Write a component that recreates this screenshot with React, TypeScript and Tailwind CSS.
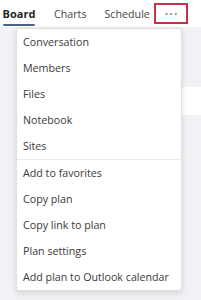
import { MoreHorizontal } from "lucide-react";

const GROUP_A = ["Conversation", "Members", "Files", "Notebook", "Sites"];
const GROUP_B = ["Add to favorites", "Copy plan", "Copy link to plan", "Plan settings", "Add plan to Outlook calendar"];

export default function App() {
  return (
    <div className="relative w-[201px] h-[300px] overflow-hidden bg-[#f1f2f5] font-['Open_Sans',sans-serif] text-[#3b3a39]">
      {/* tab bar */}
      <div className="h-[27px] bg-white flex items-start">
        <div className="ml-[3px] w-[32px] h-[27px] flex flex-col items-center">
          <span className="mt-[6px] text-[11px] leading-[16px] font-bold text-[#252424]">Board</span>
          <div className="mt-[2px] h-[2px] w-[32px] rounded-full bg-[#4a6487]" />
        </div>
        <span className="ml-[19px] mt-[6px] text-[10.7px] leading-[16px] text-[#484644]">Charts</span>
        <span className="ml-[18px] mt-[6px] text-[10.7px] leading-[16px] text-[#484644]">Schedule</span>
        <div className="ml-[4px] mt-[3px] w-[34px] h-[21px] border-2 border-[#c4314b] flex items-center justify-center text-[#8a8886]">
          <MoreHorizontal size={16} strokeWidth={1.5} />
        </div>
      </div>

      {/* card behind menu */}
      <div className="absolute left-[182px] top-[87px] w-[30px] h-[28px] bg-white" />

      {/* dropdown */}
      <div className="absolute left-[16px] top-[28px] w-[166px] bg-white rounded-[2px] border border-[#e1dfdd] shadow-[0_2px_6px_rgba(0,0,0,0.12)]">
        <ul>
          {GROUP_A.map((t) => (
            <li key={t} className="h-[26px] flex items-center pl-[6px] text-[10.7px]">{t}</li>
          ))}
        </ul>
        <div className="h-px bg-[#edebe9]" />
        <ul>
          {GROUP_B.map((t) => (
            <li key={t} className="h-[26px] flex items-center pl-[6px] text-[10.7px] whitespace-nowrap">{t}</li>
          ))}
        </ul>
      </div>
    </div>
  );
}
